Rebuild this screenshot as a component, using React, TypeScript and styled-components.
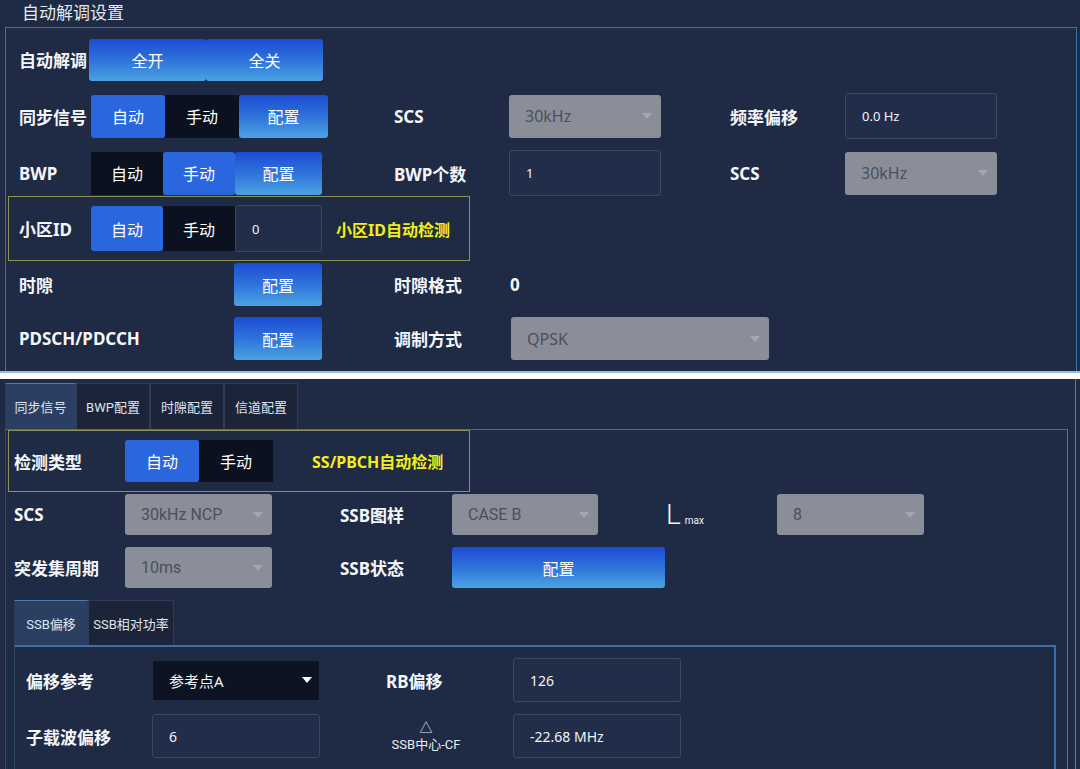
import styled, { createGlobalStyle, css } from "styled-components";

const GlobalStyle = createGlobalStyle`
  body {
    margin: 0;
    background: #ffffff;
    overflow: hidden;
    font-family: "Noto Sans", "Noto Sans CJK SC", sans-serif;
  }
`;

type Variant = "solid" | "dark" | "grad";

// top screenshot
const TopPanel = styled.section`
  height: 373px;
  background: #1f2a44;
  border-bottom: 2px solid #8fbde3;
  box-sizing: border-box;
`;

const PanelTitle = styled.div`
  height: 27px;
  padding-left: 22px;
  font-size: 17px;
  line-height: 25px;
  color: #e4e9f2;
`;

const PanelBody = styled.div`
  margin: 0 3px 0 5px;
  border: 1px solid #2c78ad;
  border-bottom: none;
  padding: 10px 0 0 13px;
  height: 344px;
  box-sizing: border-box;
  display: flex;
  flex-direction: column;
  gap: 12px;
`;

const TopRow = styled.div<{ $shift?: number }>`
  display: grid;
  grid-template-columns: 70px 305px 115px 221px 115px 152px;
  align-items: center;
  height: 43px;
  margin-top: ${(p) => p.$shift ?? 0}px;
`;

const Label = styled.div<{ $size?: number }>`
  font-size: ${(p) => p.$size ?? 17}px;
  font-weight: 700;
  color: #f4f6fa;
  white-space: nowrap;
`;

const Group = styled.div<{ $offset?: number }>`
  display: flex;
  align-items: center;
  margin-left: ${(p) => p.$offset ?? 0}px;
`;

const Btn = styled.div<{ $variant: Variant; $w: number; $h?: number }>`
  width: ${(p) => p.$w}px;
  height: ${(p) => p.$h ?? 43}px;
  display: flex;
  align-items: center;
  justify-content: center;
  font-size: 16px;
  color: #ffffff;
  border-radius: 3px;
  flex-shrink: 0;
  ${(p) =>
    p.$variant === "solid" &&
    css`
      background: #2a66de;
    `}
  ${(p) =>
    p.$variant === "dark" &&
    css`
      background: #0b111e;
      border-radius: 0;
    `}
  ${(p) =>
    p.$variant === "grad" &&
    css`
      background: linear-gradient(180deg, #1c4bd4 0%, #2f73da 50%, #4aa3e2 100%);
    `}
`;

const SelectBox = styled.div<{ $w: number; $h?: number; $font?: string }>`
  width: ${(p) => p.$w}px;
  height: ${(p) => p.$h ?? 43}px;
  box-sizing: border-box;
  background: #8b8e99;
  border-radius: 3px;
  color: #4a4f5c;
  font-size: 16px;
  font-family: ${(p) => p.$font ?? `"Noto Sans", "Noto Sans CJK SC", sans-serif`};
  padding: 0 9px 0 16px;
  display: flex;
  align-items: center;
  justify-content: space-between;
`;

const Caret = styled.span<{ $color?: string; $size?: number }>`
  width: 0;
  height: 0;
  border-left: ${(p) => p.$size ?? 5}px solid transparent;
  border-right: ${(p) => p.$size ?? 5}px solid transparent;
  border-top: ${(p) => (p.$size ?? 5) + 1}px solid ${(p) => p.$color ?? "#a5a8b2"};
`;

const InputBox = styled.div<{ $w: number; $h?: number; $size?: number }>`
  width: ${(p) => p.$w}px;
  height: ${(p) => p.$h ?? 46}px;
  box-sizing: border-box;
  background: #222d49;
  border: 1px solid #3b4763;
  border-radius: 3px;
  color: #f2f4f8;
  font-size: ${(p) => p.$size ?? 13}px;
  padding-left: 16px;
  display: flex;
  align-items: center;
  flex-shrink: 0;
`;

// yellow frame round the auto-detect rows
const Highlight = styled.div<{ $w: number; $h: number; $pad: number }>`
  width: ${(p) => p.$w}px;
  height: ${(p) => p.$h}px;
  box-sizing: border-box;
  border: 1px solid #8c9256;
  display: flex;
  align-items: center;
  padding-left: ${(p) => p.$pad}px;
  flex-shrink: 0;
`;

const Note = styled.div<{ $gap: number }>`
  margin-left: ${(p) => p.$gap}px;
  font-size: 16px;
  font-weight: 700;
  color: #f3ee1b;
  white-space: nowrap;
`;

const Value = styled.div`
  font-size: 17px;
  font-weight: 700;
  color: #f4f6fa;
  padding-left: 1px;
`;

// bottom screenshot
const BottomPanel = styled.section`
  margin-top: 6px;
  height: 390px;
  background: #1f2a44;
  padding-top: 4px;
  box-sizing: border-box;
  box-shadow: inset -4px 0 0 #1f2a44, inset -5px 0 0 #5b7ea8;
`;

const TabBar = styled.div<{ $left: number }>`
  display: flex;
  margin-left: ${(p) => p.$left}px;
`;

const Tab = styled.div<{ $active?: boolean; $w: number; $h: number }>`
  width: ${(p) => p.$w}px;
  height: ${(p) => p.$h}px;
  box-sizing: border-box;
  display: flex;
  align-items: center;
  justify-content: center;
  font-size: 13px;
  font-family: Roboto, "Noto Sans CJK SC", sans-serif;
  color: #dfe5ef;
  white-space: nowrap;
  background: ${(p) => (p.$active ? "#2b3f62" : "#1b2439")};
  border: 1px solid #303b55;
  border-top: 1px solid ${(p) => (p.$active ? "#4d7cb5" : "#303b55")};
  border-bottom: none;
`;

const TabBody = styled.div`
  margin-left: 5px;
  width: 1063px;
  height: 340px;
  box-sizing: border-box;
  border-top: 1px solid #3e6ea8;
  border-right: 1px solid #4d79ab;
  border-left: 1px solid #2b4a70;
  display: flex;
  flex-direction: column;
`;

const BottomRow = styled.div`
  display: grid;
  grid-template-columns: 111px 215px 112px 214px 111px 147px;
  align-items: center;
  height: 41px;
  padding-left: 8px;
  flex-shrink: 0;
`;

const LMax = styled.div`
  color: #f0f2f6;
  font-family: Roboto, sans-serif;
  font-size: 28px;
  font-weight: 300;
  line-height: 1;
  display: flex;
  align-items: baseline;
  small {
    font-size: 10px;
    font-weight: 400;
    margin-left: 4px;
  }
`;

const SubPanel = styled.div`
  margin-left: 8px;
  width: 1042px;
  flex: 1;
  box-sizing: border-box;
  border-top: 2px solid #3e6ea8;
  border-right: 2px solid #3e6ea8;
  border-left: 1px solid #2d4566;
  padding: 11px 0 0 11px;
  display: flex;
  flex-direction: column;
  gap: 12px;
`;

const SubRow = styled.div`
  display: grid;
  grid-template-columns: 126px 234px 127px 168px;
  align-items: center;
  height: 44px;
`;

const DarkSelect = styled.div`
  width: 166px;
  height: 39px;
  margin-left: 1px;
  box-sizing: border-box;
  background: #0d1322;
  border-radius: 2px;
  color: #f2f4f8;
  font-size: 15px;
  padding: 0 7px 0 16px;
  display: flex;
  align-items: center;
  justify-content: space-between;
`;

const StackLabel = styled.div`
  width: 80px;
  text-align: center;
  font-size: 13px;
  line-height: 17px;
  color: #e8ecf3;
  font-family: Roboto, "Noto Sans CJK SC", sans-serif;
`;

const Spacer = styled.div<{ $h: number }>`
  height: ${(p) => p.$h}px;
  flex-shrink: 0;
`;

const robo = `Roboto, "Noto Sans CJK SC", sans-serif`;

export default function App() {
  return (
    <>
      <GlobalStyle />
      <TopPanel>
        <PanelTitle>自动解调设置</PanelTitle>
        <PanelBody>
          <TopRow>
            <Label>自动解调</Label>
            <Group>
              <Btn $variant="grad" $w={117} $h={42}>全开</Btn>
              <Btn $variant="grad" $w={117} $h={42}>全关</Btn>
            </Group>
          </TopRow>

          <TopRow>
            <Label>同步信号</Label>
            <Group $offset={2}>
              <Btn $variant="solid" $w={74}>自动</Btn>
              <Btn $variant="dark" $w={74}>手动</Btn>
              <Btn $variant="grad" $w={89}>配置</Btn>
            </Group>
            <Label>SCS</Label>
            <SelectBox $w={152}>
              30kHz
              <Caret />
            </SelectBox>
            <Label>频率偏移</Label>
            <InputBox $w={152}>0.0 Hz</InputBox>
          </TopRow>

          <TopRow $shift={2}>
            <Label>BWP</Label>
            <Group $offset={2}>
              <Btn $variant="dark" $w={72}>自动</Btn>
              <Btn $variant="solid" $w={72}>手动</Btn>
              <Btn $variant="grad" $w={87}>配置</Btn>
            </Group>
            <Label>BWP个数</Label>
            <InputBox $w={152}>1</InputBox>
            <Label>SCS</Label>
            <SelectBox $w={152}>
              30kHz
              <Caret />
            </SelectBox>
          </TopRow>

          <Highlight $w={462} $h={65} $pad={10} style={{ margin: "-9px 0 -10px -11px" }}>
            <Label style={{ width: 72 }}>小区ID</Label>
            <Btn $variant="solid" $w={72} $h={45}>自动</Btn>
            <Btn $variant="dark" $w={72} $h={45}>手动</Btn>
            <InputBox $w={87} $h={47}>0</InputBox>
            <Note $gap={14}>小区ID自动检测</Note>
          </Highlight>

          <TopRow>
            <Label>时隙</Label>
            <Group $offset={145}>
              <Btn $variant="grad" $w={88}>配置</Btn>
            </Group>
            <Label>时隙格式</Label>
            <Value>0</Value>
          </TopRow>

          <TopRow $shift={-1}>
            <Label>PDSCH/PDCCH</Label>
            <Group $offset={145}>
              <Btn $variant="grad" $w={88}>配置</Btn>
            </Group>
            <Label>调制方式</Label>
            <SelectBox $w={258} style={{ marginLeft: 2 }}>
              QPSK
              <Caret />
            </SelectBox>
          </TopRow>
        </PanelBody>
      </TopPanel>

      <BottomPanel>
        <TabBar $left={5}>
          <Tab $active $w={71} $h={46}>同步信号</Tab>
          <Tab $w={74} $h={46}>BWP配置</Tab>
          <Tab $w={74} $h={46}>时隙配置</Tab>
          <Tab $w={74} $h={46}>信道配置</Tab>
        </TabBar>
        <TabBody>
          <Highlight $w={462} $h={62} $pad={5} style={{ marginLeft: 2 }}>
            <Label style={{ width: 111 }}>检测类型</Label>
            <Btn $variant="solid" $w={74} $h={42}>自动</Btn>
            <Btn $variant="dark" $w={74} $h={42}>手动</Btn>
            <Note $gap={39}>SS/PBCH自动检测</Note>
          </Highlight>

          <Spacer $h={2} />
          <BottomRow>
            <Label>SCS</Label>
            <SelectBox $w={147} $h={41} $font={robo}>
              30kHz NCP
              <Caret />
            </SelectBox>
            <Label>SSB图样</Label>
            <SelectBox $w={146} $h={41} $font={robo}>
              CASE B
              <Caret />
            </SelectBox>
            <LMax>
              L<small>max</small>
            </LMax>
            <SelectBox $w={147} $h={41} $font={robo}>
              8
              <Caret />
            </SelectBox>
          </BottomRow>

          <Spacer $h={12} />
          <BottomRow>
            <Label>突发集周期</Label>
            <SelectBox $w={147} $h={41} $font={robo}>
              10ms
              <Caret />
            </SelectBox>
            <Label>SSB状态</Label>
            <Btn $variant="grad" $w={213} $h={41}>配置</Btn>
          </BottomRow>

          <Spacer $h={12} />
          <TabBar $left={8}>
            <Tab $active $w={74} $h={45}>SSB偏移</Tab>
            <Tab $w={86} $h={45}>SSB相对功率</Tab>
          </TabBar>

          <SubPanel>
            <SubRow>
              <Label>偏移参考</Label>
              <DarkSelect>
                参考点A
                <Caret $color="#ffffff" $size={5} />
              </DarkSelect>
              <Label>RB偏移</Label>
              <InputBox $w={168} $h={44} $size={14}>126</InputBox>
            </SubRow>
            <SubRow>
              <Label>子载波偏移</Label>
              <InputBox $w={168} $h={44} $size={14}>6</InputBox>
              <StackLabel>
                △
                <br />
                SSB中心-CF
              </StackLabel>
              <InputBox $w={168} $h={44} $size={14}>-22.68 MHz</InputBox>
            </SubRow>
          </SubPanel>
        </TabBody>
      </BottomPanel>
    </>
  );
}
